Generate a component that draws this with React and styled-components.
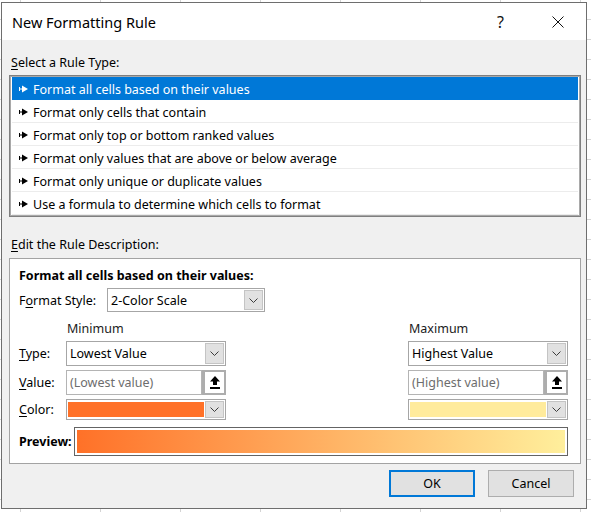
import React from "react";
import styled, { createGlobalStyle } from "styled-components";

const GlobalStyle = createGlobalStyle`
  html, body { margin: 0; padding: 0; }
  body {
    width: 591px;
    height: 512px;
    overflow: hidden;
    font-family: "Noto Sans", "Open Sans", sans-serif;
    background-color: #ffffff;
    background-image:
      repeating-linear-gradient(to right, transparent 0 20px, #d4d4d4 20px 21px, transparent 21px 80px),
      repeating-linear-gradient(to bottom, transparent 0 19px, #d4d4d4 19px 20px);
  }
  #root { padding: 2px 0 0 1px; }
`;

const Dialog = styled.div`
  width: 586px;
  height: 507px;
  box-sizing: border-box;
  border: 1px solid #6e6e6e;
  background: #f0f0f0;
  display: flex;
  flex-direction: column;
  font-size: 12.5px;
  color: #000;
`;

const TitleBar = styled.div`
  height: 37px;
  background: #ffffff;
  display: flex;
  align-items: center;
  padding-left: 10px;
  flex-shrink: 0;
`;

const Title = styled.div`
  font-size: 14.5px;
  flex: 1;
`;

const TitleButton = styled.div`
  width: 57px;
  height: 37px;
  display: flex;
  align-items: center;
  justify-content: center;
  font-size: 16px;
  color: #111;
`;

const Body = styled.div`
  flex: 1;
  display: flex;
  flex-direction: column;
  padding: 0 5px 0 7px;
`;

const SectionLabel = styled.div`
  line-height: 16px;
  height: 16px;
  padding-left: 2px;
  margin-top: ${(p) => p.$top}px;
`;

const U = styled.span`
  text-decoration: underline;
  text-underline-offset: 2px;
`;

const List = styled.div`
  margin-top: 4px;
  height: 142px;
  box-sizing: border-box;
  border: 1px solid #7f7f7f;
  box-shadow: inset 0 0 0 1px #a9a9a9;
  background: #fff;
  padding: 1px 2px;
  display: flex;
  flex-direction: column;
`;

const Row = styled.div`
  height: 23px;
  box-sizing: border-box;
  display: flex;
  align-items: center;
  padding: 2px 0 0 7px;
  gap: 5px;
  background: ${(p) => (p.$selected ? "#0078d7" : "#fff")};
  color: ${(p) => (p.$selected ? "#fff" : "#000")};
  border-bottom: 1px solid ${(p) => (p.$selected ? "#0078d7" : "#ececec")};
`;

const RuleBox = styled.div`
  margin-top: 5px;
  height: 206px;
  box-sizing: border-box;
  border: 1px solid #a3a3a3;
  background: #fff;
  padding: 9px 12px 0 9px;
  display: flex;
  flex-direction: column;
`;

const Bold = styled.div`
  font-weight: 700;
  line-height: 16px;
  height: 16px;
`;

const StyleRow = styled.div`
  margin-top: 4px;
  display: flex;
  align-items: center;
`;

const StyleLabel = styled.div`
  width: 88px;
`;

const Grid = styled.div`
  margin-top: 9px;
  display: grid;
  grid-template-columns: 47px 160px 1fr 160px;
  grid-template-rows: 16px 25px 25px 21px;
  row-gap: 4px;
  align-items: center;
`;

const ColHead = styled.div`
  grid-column: ${(p) => p.$col};
  line-height: 16px;
  color: #1a1a1a;
  padding-left: 1px;
`;

const Select = styled.div`
  grid-column: ${(p) => p.$col || "auto"};
  width: ${(p) => p.$width || 160}px;
  height: ${(p) => p.$height || 25}px;
  box-sizing: border-box;
  border: 1px solid #a6a6a6;
  background: #fff;
  display: flex;
  align-items: stretch;
  padding: 1px 1px 1px 0;
`;

const SelectText = styled.div`
  flex: 1;
  display: flex;
  align-items: center;
  padding-left: 3px;
  color: ${(p) => (p.$muted ? "#6d6d6d" : "#000")};
`;

const Swatch = styled.div`
  flex: 1;
  margin: 1px;
  background: ${(p) => p.$color};
`;

const DropButton = styled.div`
  width: 19px;
  box-sizing: border-box;
  border: 1px solid #c4c4c4;
  background: #e1e1e1;
  display: flex;
  align-items: center;
  justify-content: center;
`;

const ValueField = styled.div`
  grid-column: ${(p) => p.$col};
  height: 25px;
  display: flex;
`;

const ValueInput = styled.div`
  flex: 1;
  box-sizing: border-box;
  border: 1px solid #b4b4b4;
  background: #fff;
  display: flex;
  align-items: center;
  padding-left: 3px;
  color: #6d6d6d;
`;

const PickButton = styled.div`
  width: 24px;
  box-sizing: border-box;
  border: 2px solid #adadad;
  border-left-width: 3px;
  background: #fff;
  display: flex;
  align-items: center;
  justify-content: center;
`;

const PreviewRow = styled.div`
  margin-top: 7px;
  display: flex;
  align-items: center;
`;

const PreviewLabel = styled.div`
  width: 55px;
  font-weight: 700;
`;

const PreviewBox = styled.div`
  flex: 1;
  height: 29px;
  box-sizing: border-box;
  border: 1px solid #646464;
  padding: 2px;
  background: #fff;
`;

const Gradient = styled.div`
  height: 100%;
  background: linear-gradient(to right, #ff7128, #ffef9c);
`;

const Footer = styled.div`
  margin-top: 6px;
  display: flex;
  justify-content: flex-end;
  gap: 13px;
  padding-right: 7px;
`;

const Button = styled.div`
  width: 86px;
  height: 27px;
  box-sizing: border-box;
  border: ${(p) => (p.$primary ? "2px solid #0078d7" : "1px solid #adadad")};
  background: #e1e1e1;
  display: flex;
  align-items: center;
  justify-content: center;
`;

const Chevron = () => (
  <svg width="9" height="5" viewBox="0 0 9 5">
    <path d="M0.5 0.5 L4.5 4.5 L8.5 0.5" fill="none" stroke="#3c3c3c" strokeWidth="1" />
  </svg>
);

const Bullet = ({ color }) => (
  <svg width="9" height="8" viewBox="0 0 9 8" style={{ flexShrink: 0 }}>
    <rect x="0" y="2" width="1" height="4" fill={color} />
    <rect x="0" y="3.5" width="4" height="1" fill={color} />
    <polygon points="3,0.5 9,4 3,7.5" fill={color} />
  </svg>
);

const UploadIcon = () => (
  <svg width="10" height="13" viewBox="0 0 10 13">
    <polygon points="5,0 10,5.5 7,5.5 7,9 3,9 3,5.5 0,5.5" fill="#000" />
    <rect x="0" y="11" width="10" height="2" fill="#000" />
  </svg>
);

const CloseIcon = () => (
  <svg width="12" height="12" viewBox="0 0 12 12">
    <path d="M0.5 0.5 L11.5 11.5 M11.5 0.5 L0.5 11.5" stroke="#111" strokeWidth="1" />
  </svg>
);

const rules = [
  "Format all cells based on their values",
  "Format only cells that contain",
  "Format only top or bottom ranked values",
  "Format only values that are above or below average",
  "Format only unique or duplicate values",
  "Use a formula to determine which cells to format",
];

export default function App() {
  return (
    <>
      <GlobalStyle />
      <Dialog>
        <TitleBar>
          <Title>New Formatting Rule</Title>
          <TitleButton>?</TitleButton>
          <TitleButton>
            <CloseIcon />
          </TitleButton>
        </TitleBar>
        <Body>
          <SectionLabel $top={15}>
            <U>S</U>elect a Rule Type:
          </SectionLabel>
          <List>
            {rules.map((r, i) => (
              <Row key={r} $selected={i === 0}>
                <Bullet color={i === 0 ? "#fff" : "#000"} />
                {r}
              </Row>
            ))}
          </List>
          <SectionLabel $top={20}>
            <U>E</U>dit the Rule Description:
          </SectionLabel>
          <RuleBox>
            <Bold>Format all cells based on their values:</Bold>
            <StyleRow>
              <StyleLabel>
                F<U>o</U>rmat Style:
              </StyleLabel>
              <Select $width={158} $height={24}>
                <SelectText>2-Color Scale</SelectText>
                <DropButton>
                  <Chevron />
                </DropButton>
              </Select>
            </StyleRow>
            <Grid>
              <ColHead $col={2}>Minimum</ColHead>
              <ColHead $col={4}>Maximum</ColHead>

              <div>
                <U>T</U>ype:
              </div>
              <Select $col={2}>
                <SelectText>Lowest Value</SelectText>
                <DropButton>
                  <Chevron />
                </DropButton>
              </Select>
              <Select $col={4}>
                <SelectText>Highest Value</SelectText>
                <DropButton>
                  <Chevron />
                </DropButton>
              </Select>

              <div>
                <U>V</U>alue:
              </div>
              <ValueField $col={2}>
                <ValueInput>(Lowest value)</ValueInput>
                <PickButton>
                  <UploadIcon />
                </PickButton>
              </ValueField>
              <ValueField $col={4}>
                <ValueInput>(Highest value)</ValueInput>
                <PickButton>
                  <UploadIcon />
                </PickButton>
              </ValueField>

              <div>
                <U>C</U>olor:
              </div>
              <Select $col={2} $height={21}>
                <Swatch $color="#ff7128" />
                <DropButton>
                  <Chevron />
                </DropButton>
              </Select>
              <Select $col={4} $height={21}>
                <Swatch $color="#ffeb9c" />
                <DropButton>
                  <Chevron />
                </DropButton>
              </Select>
            </Grid>
            <PreviewRow>
              <PreviewLabel>Preview:</PreviewLabel>
              <PreviewBox>
                <Gradient />
              </PreviewBox>
            </PreviewRow>
          </RuleBox>
          <Footer>
            <Button $primary>OK</Button>
            <Button>Cancel</Button>
          </Footer>
        </Body>
      </Dialog>
    </>
  );
}
